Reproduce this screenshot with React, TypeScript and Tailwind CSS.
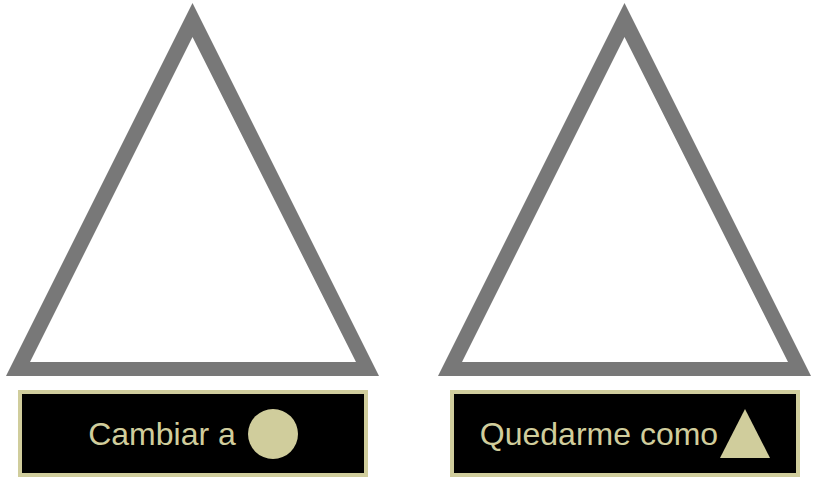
const TAN = "#d0cd9c";

function Outline() {
  // outer and inner triangle, filled with evenodd to make the thick grey frame
  return (
    <svg width="386" height="376" viewBox="0 0 386 376" className="block">
      <path
        d="M192.5 3 L379 376 L6 376 Z M192.5 37 L356 362 L30 362 Z"
        fill="#787878"
        fillRule="evenodd"
      />
    </svg>
  );
}

function Circle() {
  return (
    <svg width="50" height="50" viewBox="0 0 50 50" className="block shrink-0">
      <circle cx="25" cy="25" r="25" fill={TAN} />
    </svg>
  );
}

function Triangle() {
  return (
    <svg width="50" height="49" viewBox="0 0 50 49" className="block shrink-0">
      <path d="M25 0 L50 49 L0 49 Z" fill={TAN} />
    </svg>
  );
}

function ChoiceButton({ label, icon, gap }: { label: string; icon: React.ReactNode; gap: string }) {
  return (
    <button className="mt-[14px] flex h-[87px] w-[350px] items-center justify-center border-4 border-[#d0cd9c] bg-black">
      <span className={`text-[32px] leading-none text-[#d0cd9c] ${gap}`}>{label}</span>
      {icon}
    </button>
  );
}

export default function App() {
  return (
    <div
      className="flex h-[491px] w-[819px] gap-[46px] bg-white"
      style={{ fontFamily: '"Liberation Sans", Arial, sans-serif' }}
    >
      <div className="flex w-[386px] flex-col items-center">
        <Outline />
        <ChoiceButton label="Cambiar a" icon={<Circle />} gap="mr-[12px]" />
      </div>
      <div className="flex w-[386px] flex-col items-center">
        <Outline />
        <ChoiceButton label="Quedarme como" icon={<Triangle />} gap="mr-[2px]" />
      </div>
    </div>
  );
}
